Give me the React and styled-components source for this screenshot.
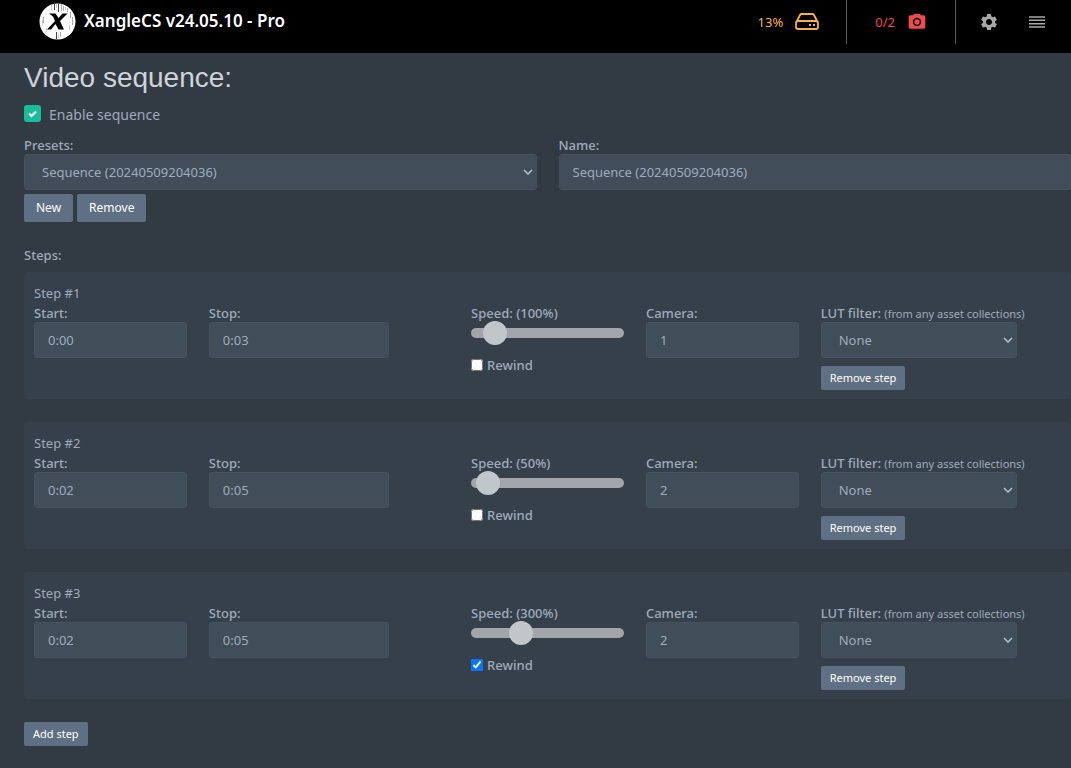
import { useState } from "react";
import styled, { createGlobalStyle } from "styled-components";
import { MdCameraAlt, MdSettings } from "react-icons/md";

const GlobalStyle = createGlobalStyle`
  * {
    box-sizing: border-box;
  }
  body {
    margin: 0;
    background-color: #323a43;
    color: #9fabbd;
    font-family: "Noto Sans", sans-serif;
    font-size: 13px;
    line-height: 20px;
  }
  button, input, select {
    font: inherit;
  }
`

const StyledHeader = styled.header`
  display: flex;
  align-items: flex-start;
  height: 53px;
  padding-left: 39px;
  background-color: #000;

  .brand {
    display: flex;
    align-items: center;
    gap: 8px;
    height: 42px;
    margin-right: auto;
    color: #fff;
    font-size: 17px;
    font-weight: 600;
    text-decoration: none;
  }
`

const HeaderStatus = styled.div`
  display: flex;
  align-items: center;
  gap: 12px;
  height: 44px;
  padding: 0 ${(props) => props.$right} 0 28px;
  border-right: 1px solid #5a5a5a;
  color: ${(props) => props.$color};
`

const HeaderButton = styled.button`
  display: flex;
  align-items: center;
  justify-content: center;
  width: 48px;
  height: 44px;
  padding: 0;
  border: 0;
  background: none;
  color: #a8a8a8;
`

const HeaderActions = styled.div`
  display: flex;
  padding: 0 10px 0 9px;
`

const StyledMain = styled.main`
  padding: 8px 0 22px 24px;

  h1 {
    margin: 0;
    color: #ced4da;
    font-family: "Liberation Sans", sans-serif;
    font-size: 28px;
    font-weight: 400;
    line-height: 34px;
  }
`

const EnableLabel = styled.label`
  display: flex;
  align-items: flex-start;
  gap: 8px;
  width: fit-content;
  margin: 10px 0;
  font-size: 14px;

  input {
    appearance: none;
    width: 17px;
    height: 17px;
    margin: 0;
    border-radius: 3px;
    background: #1abc9c;
  }
  .box {
    display: grid;
  }
  .box > * {
    grid-area: 1 / 1;
  }
`

const PresetRow = styled.section`
  display: grid;
  grid-template-columns: 1fr 1fr;
  gap: 22px;
`

const FieldLabel = styled.label`
  display: block;
  height: 19px;
  font-weight: 500;
  white-space: nowrap;

  small {
    font-size: 11px;
    font-weight: 400;
  }
`

const TextInput = styled.input`
  display: block;
  width: ${(props) => props.$width || "100%"};
  height: 36px;
  padding: 0 13px;
  border: 1px solid #46525f;
  border-radius: 3px;
  outline: none;
  background-color: #414d59;
  color: #9fabbd;
`

const SelectWrap = styled.div`
  display: grid;
  align-items: center;

  select {
    grid-area: 1 / 1;
    appearance: none;
    width: 100%;
    height: 36px;
    padding: 0 17px;
    border: 1px solid #46525f;
    border-radius: 3px;
    outline: none;
    background-color: #414d59;
    color: #9fabbd;
  }
  svg {
    grid-area: 1 / 1;
    justify-self: end;
    margin-right: 4px;
    pointer-events: none;
  }
`

const Button = styled.button`
  height: ${(props) => (props.$small ? "24px" : "28px")};
  padding: 0 ${(props) => (props.$small ? "9px" : "12px")};
  border: 0;
  border-radius: 2px;
  background-color: #5f7084;
  color: #fff;
  font-size: ${(props) => (props.$small ? "11px" : "12px")};
  white-space: nowrap;
`

const ButtonRow = styled.div`
  display: flex;
  gap: 4px;
  margin-top: 4px;
`

const StepsTitle = styled.h2`
  margin: 23px 0 7px;
  font-size: 13px;
  font-weight: 500;
  line-height: 20px;
`

const StyledStep = styled.section`
  min-height: 127px;
  margin-bottom: 23px;
  padding-top: 11px;
  border-radius: 4px;
  background-color: #36404a;

  h3 {
    margin: 0 10px;
    font-size: 13px;
    font-weight: 400;
    line-height: 20px;
  }
`

const StepRow = styled.div`
  display: grid;
  grid-template-columns: 2fr 3fr 2fr 2fr 3fr;
  margin: 0 -1px;

  > div {
    min-width: 0;
    padding: 0 11px;
  }
  > .lut {
    width: 75%;
    margin-left: 11px;
    padding: 0;
  }
  .lut button {
    margin-top: 8px;
  }
`

const Range = styled.input`
  display: block;
  appearance: none;
  width: 100%;
  height: 10px;
  margin: 6px 0 17px;
  border-radius: 5px;
  outline: none;
  background: #a2a5a9;

  &::-webkit-slider-thumb {
    appearance: none;
    width: 24px;
    height: 24px;
    border-radius: 50%;
    background: #c1c6ca;
  }
`

const RewindLabel = styled.label`
  display: flex;
  align-items: center;
  gap: 4px;
  width: fit-content;
  font-weight: 500;

  input {
    width: 12px;
    height: 12px;
    margin: 0;
    accent-color: #0075ff;
  }
`

function Logo() {
  return (
    <svg width="37" height="37" viewBox="0 0 37 37" aria-hidden="true">
      <circle cx="18.5" cy="18.5" r="18" fill="#fff" />
      <path d="M15.500 1v6M19.500 1v8M17.500 29v7" stroke="#444" strokeWidth="1" />
      <path d="M22.500 1v7M24.500 3v5M21.500 29v5M31.500 9v6M33.500 14v8M4.500 14v6M28.500 5v4" stroke="#aaa" strokeWidth="1" />
      <path d="M17.500 1v4M12.500 2v5M26.500 4v3M7.500 25v4M30.500 22v5M3.500 17v5M19.500 31v4" stroke="#ccc" strokeWidth="1" />
      <path d="M10 10.500h6.500l3 4.500 4-4.500h5l-7.500 7.500 4 8.500h-5.500l-3-5.500-4.500 5.500H8l8-8.500-2-4.500z" fill="#000" />
    </svg>
  )
}

function DriveIcon() {
  return (
    <svg width="24" height="18" viewBox="0 0 24 18" fill="none" stroke="currentColor" strokeWidth="1.8" strokeLinejoin="round" aria-hidden="true">
      <path d="M1 10 5 2q.5-1 1.500-1h11q1 0 1.500 1l4 8M3 8h18q2 0 2 2v4q0 2-2 2H3q-2 0-2-2v-4q0-2 2-2z" />
      <path d="M14 12h2M18 12h2" strokeWidth="2" />
    </svg>
  )
}

function MenuIcon() {
  return (
    <svg width="16" height="12" viewBox="0 0 16 12" stroke="currentColor" strokeWidth="1.6" aria-hidden="true">
      <path d="M0 1h16M0 4.300h16M0 7.700h16M0 11h16" />
    </svg>
  )
}

function SelectBox({ id, children }) {
  return (
    <SelectWrap>
      <select id={id}>{children}</select>
      <svg width="10" height="6" viewBox="0 0 10 6" fill="none" stroke="#b9c2cd" strokeWidth="1.5" aria-hidden="true">
        <path d="M1 1l4 4 4-4" />
      </svg>
    </SelectWrap>
  )
}

function Step({ number, start, stop, initialSpeed, camera, rewind }) {
  const [speed, setSpeed] = useState(initialSpeed);
  const id = `step-${number}`;

  return (
    <StyledStep>
      <h3>Step #{number}</h3>
      <StepRow>
        <div>
          <FieldLabel htmlFor={`${id}-start`}>Start:</FieldLabel>
          <TextInput id={`${id}-start`} defaultValue={start} />
        </div>
        <div>
          <FieldLabel htmlFor={`${id}-stop`}>Stop:</FieldLabel>
          <TextInput id={`${id}-stop`} defaultValue={stop} $width="75%" />
        </div>
        <div>
          <FieldLabel htmlFor={`${id}-speed`}>Speed: ({speed}%)</FieldLabel>
          <Range
            id={`${id}-speed`}
            type="range"
            min="10"
            max="1000"
            step="10"
            value={speed}
            onChange={(e) => setSpeed(e.target.value)}
          />
          <RewindLabel>
            <input type="checkbox" defaultChecked={rewind} />
            Rewind
          </RewindLabel>
        </div>
        <div>
          <FieldLabel htmlFor={`${id}-camera`}>Camera:</FieldLabel>
          <TextInput id={`${id}-camera`} defaultValue={camera} />
        </div>
        <div className="lut">
          <FieldLabel htmlFor={`${id}-lut`}>LUT filter: <small>(from any asset collections)</small></FieldLabel>
          <SelectBox id={`${id}-lut`}>
            <option>None</option>
          </SelectBox>
          <Button type="button" $small>Remove step</Button>
        </div>
      </StepRow>
    </StyledStep>
  )
}

function Header() {
  return (
    <StyledHeader>
      <a className="brand" href="#home">
        <Logo />
        XangleCS v24.05.10 - Pro
      </a>
      <HeaderStatus $color="#f7b142" $right="27px">
        13%
        <DriveIcon />
      </HeaderStatus>
      <HeaderStatus $color="#f04b4f" $right="28px">
        0/2
        <MdCameraAlt size={20} />
      </HeaderStatus>
      <HeaderActions>
        <HeaderButton type="button" aria-label="Settings"><MdSettings size={20} /></HeaderButton>
        <HeaderButton type="button" aria-label="Menu"><MenuIcon /></HeaderButton>
      </HeaderActions>
    </StyledHeader>
  )
}

function App() {
  const [enabled, setEnabled] = useState(true);

  return (
    <>
      <GlobalStyle />
      <Header />
      <StyledMain>
        <h1>Video sequence:</h1>
        <EnableLabel>
          <span className="box">
            <input type="checkbox" checked={enabled} onChange={(e) => setEnabled(e.target.checked)} />
            {enabled && (
              <svg width="17" height="17" viewBox="0 0 17 17" fill="none" stroke="#fff" strokeWidth="2" aria-hidden="true">
                <path d="M5 8.500l2.500 2.500 4.500-4.500" />
              </svg>
            )}
          </span>
          Enable sequence
        </EnableLabel>
        <PresetRow>
          <div>
            <FieldLabel htmlFor="presets">Presets:</FieldLabel>
            <SelectBox id="presets">
              <option>Sequence (20240509204036)</option>
            </SelectBox>
            <ButtonRow>
              <Button type="button">New</Button>
              <Button type="button">Remove</Button>
            </ButtonRow>
          </div>
          <div>
            <FieldLabel htmlFor="name">Name:</FieldLabel>
            <TextInput id="name" defaultValue="Sequence (20240509204036)" />
          </div>
        </PresetRow>
        <StepsTitle>Steps:</StepsTitle>
        <Step number={1} start="0:00" stop="0:03" initialSpeed={100} camera="1" />
        <Step number={2} start="0:02" stop="0:05" initialSpeed={50} camera="2" />
        <Step number={3} start="0:02" stop="0:05" initialSpeed={300} camera="2" rewind />
        <Button type="button" $small>Add step</Button>
      </StyledMain>
    </>
  )
}

export default App;
